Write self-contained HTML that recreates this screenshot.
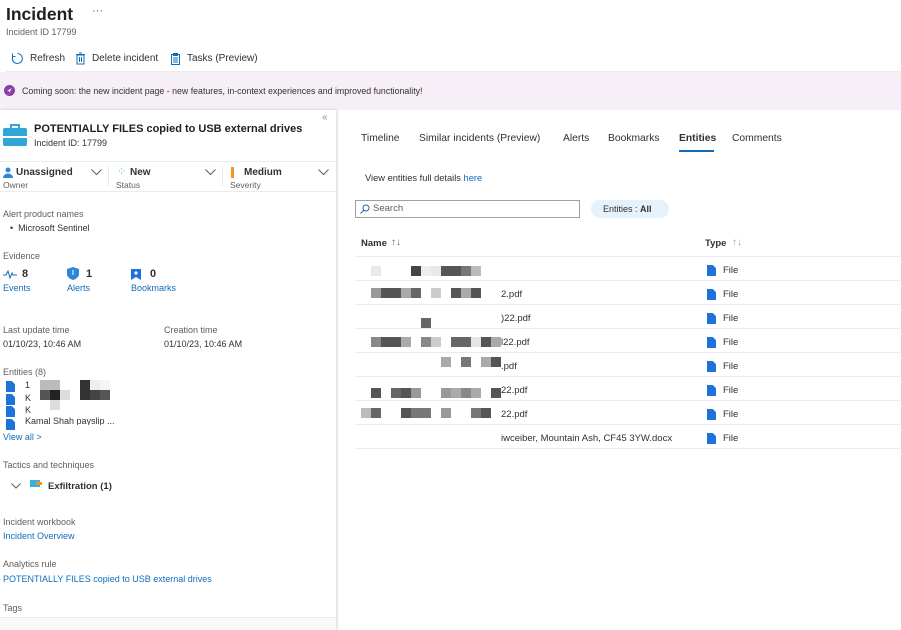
<!DOCTYPE html>
<html><head><meta charset="utf-8"><style>
*{margin:0;padding:0;box-sizing:border-box}
body{width:901px;height:630px;overflow:hidden;background:#fff;font-family:"Liberation Sans",sans-serif;color:#323130;font-size:10px;position:relative}
.a{position:absolute;white-space:nowrap}
.lbl{color:#605e5c}
.link{color:#0f6cbd}
.px{position:absolute;width:10px;height:10px}
.row{position:absolute;left:355px;width:546px;height:24px;border-bottom:1px solid #edebe9}
.fi{position:absolute;width:9px;height:11px;background:#1f73d8;clip-path:polygon(0 0,65% 0,100% 30%,100% 100%,0 100%)}
</style></head><body>
<div class="a" style="left:6px;top:4px;font-size:17.5px;font-weight:bold;color:#201f1e">Incident</div>
<div class="a" style="left:92px;top:5px;font-size:11px;color:#605e5c">···</div>
<div class="a lbl" style="left:6px;top:27px;font-size:9px">Incident ID 17799</div>
<svg class="a" style="left:11px;top:52px" width="13" height="13" viewBox="0 0 13 13"><path d="M6.5 1.5A5 5 0 1 1 2 4" fill="none" stroke="#0f6cbd" stroke-width="1"/><path d="M1.5 1.5v3h3" fill="none" stroke="#0f6cbd"/></svg>
<div class="a" style="left:30px;top:53px;font-size:10px">Refresh</div>
<svg class="a" style="left:75px;top:52px" width="11" height="13"><rect x="2" y="3" width="7" height="9" fill="none" stroke="#0f6cbd"/><path d="M1 2.5h9M4 1h3M4.5 5v5M6.5 5v5" stroke="#0f6cbd"/></svg>
<div class="a" style="left:92px;top:53px;font-size:10px">Delete incident</div>
<svg class="a" style="left:170px;top:52px" width="11" height="13"><rect x="1.5" y="2.5" width="8" height="10" fill="none" stroke="#0f6cbd"/><path d="M3.5 1.5h4v2h-4zM3 6h5M3 8h5M3 10h5" stroke="#0f6cbd" fill="none"/></svg>
<div class="a" style="left:187px;top:53px;font-size:10px">Tasks (Preview)</div>
<div class="a" style="left:6px;top:71px;width:895px;height:1px;background:#edebe9"></div>
<div class="a" style="left:0;top:72px;width:901px;height:38px;background:#f6eff7"></div>
<div class="a" style="left:4px;top:85px;width:11px;height:11px;border-radius:50%;background:#8a3ea8"></div>
<div class="a" style="left:7px;top:88px;width:5px;height:5px;background:#fff;clip-path:polygon(100% 0,0 60%,40% 60%,40% 100%)"></div>
<div class="a" style="left:22px;top:86px;font-size:8.8px">Coming soon: the new incident page - new features, in-context experiences and improved functionality!</div>
<!-- left panel -->
<div class="a" style="left:0;top:110px;width:336px;height:520px;background:#fff;box-shadow:1px 0 3px rgba(0,0,0,.18)"></div>
<div class="a" style="left:322px;top:112px;font-size:10px;color:#8a8886">«</div>
<div class="a" style="left:3px;top:128px;width:24px;height:18px;background:#2fa6d8;border-radius:2px"></div>
<div class="a" style="left:3px;top:136px;width:24px;height:2px;background:#fff"></div>
<div class="a" style="left:10px;top:124px;width:10px;height:4px;border:2px solid #2fa6d8;border-bottom:none"></div>
<div class="a" style="left:34px;top:123px;font-size:11px;font-weight:bold;color:#201f1e">POTENTIALLY FILES copied to USB external drives</div>
<div class="a" style="left:34px;top:138px;font-size:9px;color:#323130">Incident ID: 17799</div>
<div class="a" style="left:0;top:161px;width:336px;height:1px;background:#edebe9"></div>
<div class="a" style="left:0;top:191px;width:336px;height:1px;background:#edebe9"></div>
<div class="a" style="left:108px;top:166px;width:1px;height:20px;background:#edebe9"></div>
<div class="a" style="left:222px;top:166px;width:1px;height:20px;background:#edebe9"></div>
<svg class="a" style="left:3px;top:167px" width="10" height="11"><circle cx="5" cy="3" r="2.5" fill="#2b88d8"/><path d="M0 11a5 4.5 0 0 1 10 0z" fill="#2b88d8"/></svg>
<div class="a" style="left:16px;top:167px;font-size:10px;font-weight:bold">Unassigned</div>
<div class="a lbl" style="left:3px;top:180px;font-size:8.5px">Owner</div>
<div class="a" style="left:117px;top:165px;font-size:11px;color:#5ec3e8">⁘</div>
<div class="a" style="left:130px;top:167px;font-size:10px;font-weight:bold">New</div>
<div class="a lbl" style="left:116px;top:180px;font-size:8.5px">Status</div>
<div class="a" style="left:231px;top:167px;width:3px;height:11px;background:#f7941d"></div>
<div class="a" style="left:244px;top:167px;font-size:10px;font-weight:bold">Medium</div>
<div class="a lbl" style="left:230px;top:180px;font-size:8.5px">Severity</div>
<svg class="a" style="left:91px;top:169px" width="11" height="7"><path d="M.5.5l5 5 5-5" fill="none" stroke="#605e5c"/></svg>
<svg class="a" style="left:205px;top:169px" width="11" height="7"><path d="M.5.5l5 5 5-5" fill="none" stroke="#605e5c"/></svg>
<svg class="a" style="left:318px;top:169px" width="11" height="7"><path d="M.5.5l5 5 5-5" fill="none" stroke="#605e5c"/></svg>
<div class="a lbl" style="left:3px;top:209px;font-size:9px">Alert product names</div>
<div class="a" style="left:10px;top:223px;font-size:9px">•&nbsp; Microsoft Sentinel</div>
<div class="a lbl" style="left:3px;top:251px;font-size:9px">Evidence</div>
<svg class="a" style="left:3px;top:270px" width="14" height="9"><path d="M0 5h3l2-4 2 7 2-5 1 2h4" fill="none" stroke="#0f6cbd"/></svg>
<div class="a" style="left:22px;top:268px;font-size:11px;font-weight:bold">8</div>
<div class="a link" style="left:3px;top:283px;font-size:9px">Events</div>
<svg class="a" style="left:67px;top:267px" width="12" height="13"><path d="M6 0l6 2v5c0 3-3 5-6 6-3-1-6-3-6-6V2z" fill="#2b88d8"/><rect x="5.5" y="3" width="1" height="5" fill="#fff"/></svg>
<div class="a" style="left:86px;top:268px;font-size:11px;font-weight:bold">1</div>
<div class="a link" style="left:67px;top:283px;font-size:9px">Alerts</div>
<svg class="a" style="left:131px;top:269px" width="10" height="11"><path d="M0 0h10v11l-5-3-5 3z" fill="#1f73d8"/><circle cx="5" cy="4" r="1.6" fill="#fff"/></svg>
<div class="a" style="left:150px;top:268px;font-size:11px;font-weight:bold">0</div>
<div class="a link" style="left:131px;top:283px;font-size:9px">Bookmarks</div>
<div class="a lbl" style="left:3px;top:325px;font-size:9px">Last update time</div>
<div class="a" style="left:3px;top:339px;font-size:9px">01/10/23, 10:46 AM</div>
<div class="a lbl" style="left:164px;top:325px;font-size:9px">Creation time</div>
<div class="a" style="left:164px;top:339px;font-size:9px">01/10/23, 10:46 AM</div>
<div class="a lbl" style="left:3px;top:367px;font-size:9px">Entities (8)</div>
<div class="fi" style="left:6px;top:381px"></div><div class="fi" style="left:6px;top:394px"></div><div class="fi" style="left:6px;top:406px"></div><div class="fi" style="left:6px;top:419px"></div>
<div class="a" style="left:25px;top:380px;font-size:9px">1</div>
<div class="a" style="left:25px;top:393px;font-size:9px">K</div>
<div class="a" style="left:25px;top:405px;font-size:9px">K</div>
<div class="a" style="left:25px;top:416px;font-size:9px;height:9px;overflow:hidden">Kamal Shah payslip ...</div>
<div class="px" style="left:40px;top:380px;background:#bbb"></div><div class="px" style="left:50px;top:380px;background:#bbb"></div><div class="px" style="left:80px;top:380px;background:#333"></div><div class="px" style="left:90px;top:380px;background:#eee"></div><div class="px" style="left:100px;top:380px;background:#f5f5f5"></div>
<div class="px" style="left:40px;top:390px;background:#555"></div><div class="px" style="left:50px;top:390px;background:#222"></div><div class="px" style="left:60px;top:390px;background:#ddd"></div><div class="px" style="left:80px;top:390px;background:#333"></div><div class="px" style="left:90px;top:390px;background:#444"></div><div class="px" style="left:100px;top:390px;background:#555"></div>
<div class="px" style="left:50px;top:400px;background:#ddd"></div>
<div class="a link" style="left:3px;top:432px;font-size:9px">View all &gt;</div>
<div class="a lbl" style="left:3px;top:460px;font-size:9px">Tactics and techniques</div>
<svg class="a" style="left:11px;top:483px" width="10" height="6"><path d="M.5.5l4.5 4.5 4.5-4.5" fill="none" stroke="#605e5c"/></svg>
<div class="a" style="left:30px;top:480px;width:10px;height:7px;background:#3ab0e0"></div>
<div class="a" style="left:36px;top:482px;width:6px;height:3px;background:#f7941d"></div>
<div class="a" style="left:48px;top:481px;font-size:9.5px;font-weight:bold">Exfiltration (1)</div>
<div class="a lbl" style="left:3px;top:517px;font-size:9px">Incident workbook</div>
<div class="a link" style="left:3px;top:531px;font-size:9px">Incident Overview</div>
<div class="a lbl" style="left:3px;top:559px;font-size:9px">Analytics rule</div>
<div class="a link" style="left:3px;top:574px;font-size:9px">POTENTIALLY FILES copied to USB external drives</div>
<div class="a lbl" style="left:3px;top:603px;font-size:9px">Tags</div>
<div class="a" style="left:0;top:617px;width:336px;height:13px;background:#faf9f8;border-top:1px solid #edebe9"></div>
<!-- right -->
<div class="a" style="left:361px;top:133px;font-size:10.3px">Timeline</div>
<div class="a" style="left:419px;top:133px;font-size:10.3px">Similar incidents (Preview)</div>
<div class="a" style="left:563px;top:133px;font-size:10.3px">Alerts</div>
<div class="a" style="left:608px;top:133px;font-size:10.3px">Bookmarks</div>
<div class="a" style="left:679px;top:133px;font-size:10.3px;font-weight:bold">Entities</div>
<div class="a" style="left:679px;top:150px;width:35px;height:2px;background:#0f6cbd"></div>
<div class="a" style="left:732px;top:133px;font-size:10.3px">Comments</div>
<div class="a" style="left:365px;top:173px;font-size:9.3px">View entities full details <span class="link">here</span></div>
<div class="a" style="left:355px;top:200px;width:225px;height:18px;border:1px solid #a19f9d"></div>
<svg class="a" style="left:360px;top:204px" width="10" height="10"><circle cx="6" cy="4" r="3" fill="none" stroke="#0f6cbd"/><path d="M4 6L.5 9.5" stroke="#0f6cbd"/></svg>
<div class="a" style="left:373px;top:203px;font-size:9.5px;color:#605e5c">Search</div>
<div class="a" style="left:591px;top:200px;width:78px;height:18px;border-radius:9px;background:#e5f1fb"></div>
<div class="a" style="left:603px;top:204px;font-size:9px">Entities : <b>All</b></div>
<div class="a" style="left:361px;top:238px;font-size:9.5px;font-weight:bold">Name</div>
<div class="a" style="left:391px;top:237px;font-size:10px;color:#605e5c">↑↓</div>
<div class="a" style="left:705px;top:238px;font-size:9.5px;font-weight:bold">Type</div>
<div class="a" style="left:732px;top:237px;font-size:10px;color:#a19f9d">↑↓</div>
<div class="row" style="top:233px"></div>
<div class="row" style="top:257px"></div>
<div class="row" style="top:281px"></div>
<div class="row" style="top:305px"></div>
<div class="row" style="top:329px"></div>
<div class="row" style="top:353px"></div>
<div class="row" style="top:377px"></div>
<div class="row" style="top:401px"></div>
<div class="row" style="top:425px"></div>
<div class="a" style="left:501px;top:289px;font-size:9.5px">2.pdf</div>
<div class="a" style="left:501px;top:313px;font-size:9.5px">)22.pdf</div>
<div class="a" style="left:501px;top:337px;font-size:9.5px">l22.pdf</div>
<div class="a" style="left:501px;top:361px;font-size:9.5px">.pdf</div>
<div class="a" style="left:501px;top:385px;font-size:9.5px">22.pdf</div>
<div class="a" style="left:501px;top:409px;font-size:9.5px">22.pdf</div>
<div class="a" style="left:501px;top:433px;font-size:9.5px">iwceiber, Mountain Ash, CF45 3YW.docx</div>
<div class="fi" style="left:707px;top:265px"></div><div class="a" style="left:723px;top:265px;font-size:9.5px">File</div>
<div class="fi" style="left:707px;top:289px"></div><div class="a" style="left:723px;top:289px;font-size:9.5px">File</div>
<div class="fi" style="left:707px;top:313px"></div><div class="a" style="left:723px;top:313px;font-size:9.5px">File</div>
<div class="fi" style="left:707px;top:337px"></div><div class="a" style="left:723px;top:337px;font-size:9.5px">File</div>
<div class="fi" style="left:707px;top:361px"></div><div class="a" style="left:723px;top:361px;font-size:9.5px">File</div>
<div class="fi" style="left:707px;top:385px"></div><div class="a" style="left:723px;top:385px;font-size:9.5px">File</div>
<div class="fi" style="left:707px;top:409px"></div><div class="a" style="left:723px;top:409px;font-size:9.5px">File</div>
<div class="fi" style="left:707px;top:433px"></div><div class="a" style="left:723px;top:433px;font-size:9.5px">File</div>
<!-- pixel blocks -->
<div class="px" style="left:371px;top:266px;background:#e8e8e8"></div><div class="px" style="left:411px;top:266px;background:#444"></div><div class="px" style="left:421px;top:266px;background:#eee"></div><div class="px" style="left:431px;top:266px;background:#e8e8e8"></div><div class="px" style="left:441px;top:266px;background:#555"></div><div class="px" style="left:451px;top:266px;background:#555"></div><div class="px" style="left:461px;top:266px;background:#777"></div><div class="px" style="left:471px;top:266px;background:#bbb"></div>
<div class="px" style="left:371px;top:288px;background:#999"></div><div class="px" style="left:381px;top:288px;background:#555"></div><div class="px" style="left:391px;top:288px;background:#555"></div><div class="px" style="left:401px;top:288px;background:#aaa"></div><div class="px" style="left:411px;top:288px;background:#666"></div><div class="px" style="left:431px;top:288px;background:#ccc"></div><div class="px" style="left:451px;top:288px;background:#555"></div><div class="px" style="left:461px;top:288px;background:#aaa"></div><div class="px" style="left:471px;top:288px;background:#555"></div>
<div class="px" style="left:421px;top:318px;background:#666"></div>
<div class="px" style="left:371px;top:337px;background:#888"></div><div class="px" style="left:381px;top:337px;background:#555"></div><div class="px" style="left:391px;top:337px;background:#555"></div><div class="px" style="left:401px;top:337px;background:#aaa"></div><div class="px" style="left:421px;top:337px;background:#888"></div><div class="px" style="left:431px;top:337px;background:#ccc"></div><div class="px" style="left:451px;top:337px;background:#666"></div><div class="px" style="left:461px;top:337px;background:#666"></div><div class="px" style="left:471px;top:337px;background:#e5e5e5"></div><div class="px" style="left:481px;top:337px;background:#555"></div><div class="px" style="left:491px;top:337px;background:#aaa"></div>
<div class="px" style="left:441px;top:357px;background:#aaa"></div><div class="px" style="left:461px;top:357px;background:#777"></div><div class="px" style="left:481px;top:357px;background:#aaa"></div><div class="px" style="left:491px;top:357px;background:#555"></div>
<div class="px" style="left:371px;top:388px;background:#555"></div><div class="px" style="left:391px;top:388px;background:#666"></div><div class="px" style="left:401px;top:388px;background:#555"></div><div class="px" style="left:411px;top:388px;background:#999"></div><div class="px" style="left:441px;top:388px;background:#999"></div><div class="px" style="left:451px;top:388px;background:#aaa"></div><div class="px" style="left:461px;top:388px;background:#888"></div><div class="px" style="left:471px;top:388px;background:#aaa"></div><div class="px" style="left:491px;top:388px;background:#555"></div>
<div class="px" style="left:361px;top:408px;background:#bbb"></div><div class="px" style="left:371px;top:408px;background:#666"></div><div class="px" style="left:401px;top:408px;background:#555"></div><div class="px" style="left:411px;top:408px;background:#777"></div><div class="px" style="left:421px;top:408px;background:#777"></div><div class="px" style="left:441px;top:408px;background:#999"></div><div class="px" style="left:471px;top:408px;background:#777"></div><div class="px" style="left:481px;top:408px;background:#555"></div>
</body></html>
